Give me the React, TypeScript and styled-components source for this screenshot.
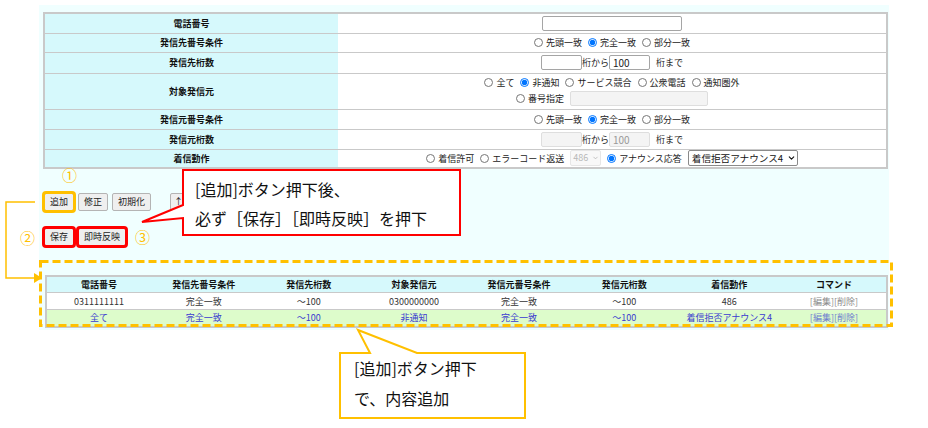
import React from "react";
import styled, { createGlobalStyle } from "styled-components";
import { ChevronDown } from "lucide-react";

const GlobalStyle = createGlobalStyle`
  html, body { margin: 0; padding: 0; background: #ffffff; }
  body { font-family: "Noto Sans CJK JP", "Noto Sans", sans-serif; }
`;

const ORANGE = "#ffc000";
const RED = "#ff0000";
const LABEL_BG = "#d6f9fc";
const LINE = "#c9c9c9";

const Page = styled.div`
  position: relative;
  width: 928px;
  height: 428px;
  overflow: hidden;
  box-sizing: border-box;
  padding: 5px 0 0 39px;
  font-family: "Noto Sans CJK JP", "Noto Sans", sans-serif;
  color: #222;
`;

const Panel = styled.div`
  width: 850px;
  box-sizing: border-box;
  background: #f0ffff;
  padding: 7px 1px 2px 4px;
`;

const FormTable = styled.table`
  width: 845px;
  border-collapse: collapse;
  border: 2px solid ${LINE};
  font-size: 9px;
  line-height: 13px;
`;

const FormRow = styled.tr<{ $h: number }>`
  height: ${(p) => p.$h}px;
`;

const LabelCell = styled.th`
  width: 293px;
  background: ${LABEL_BG};
  font-weight: bold;
  color: #111;
  text-align: center;
  padding: 0;
  border-bottom: 1px solid ${LINE};
`;

const ValueCell = styled.td`
  background: #ffffff;
  text-align: center;
  padding: 0;
  border-bottom: 1px solid ${LINE};
`;

const Line = styled.div`
  display: flex;
  justify-content: center;
  align-items: center;
  gap: 6px;
  white-space: nowrap;
  & + & {
    margin-top: 2px;
  }
`;

const Choice = styled.label`
  display: inline-flex;
  align-items: center;
  gap: 3px;
  color: #222;
`;

const Radio = styled.input.attrs({ type: "radio", readOnly: true })`
  width: 9px;
  height: 9px;
  margin: 0;
`;

const TextBox = styled.input<{ $w: number; $off?: boolean }>`
  box-sizing: border-box;
  width: ${(p) => p.$w}px;
  height: 15px;
  margin: 0;
  padding: 0 3px;
  border: 1px solid ${(p) => (p.$off ? "#dedede" : "#a5a5a5")};
  border-radius: 2px;
  background: ${(p) => (p.$off ? "#f4f4f4" : "#ffffff")};
  color: ${(p) => (p.$off ? "#999" : "#222")};
  font-family: inherit;
  font-size: 10px;
  line-height: 13px;
  text-align: left;
`;

const Joined = styled.span`
  display: inline-flex;
  align-items: center;
`;

const SelectWrap = styled.span<{ $off?: boolean }>`
  position: relative;
  display: inline-flex;
  align-items: center;
  color: ${(p) => (p.$off ? "#a0a0a0" : "#111")};
  & > svg {
    position: absolute;
    right: 2px;
    top: 50%;
    transform: translateY(-50%);
    pointer-events: none;
  }
`;

const Select = styled.select<{ $w: number; $off?: boolean }>`
  appearance: none;
  -webkit-appearance: none;
  box-sizing: border-box;
  width: ${(p) => p.$w}px;
  height: 16px;
  margin: 0;
  padding: 0 ${(p) => (p.$off ? 9 : 12)}px 0 ${(p) => (p.$off ? 2 : 3)}px;
  border: 1px solid ${(p) => (p.$off ? "#dcdcdc" : "#8a8a8a")};
  border-radius: 2px;
  background: ${(p) => (p.$off ? "#f6f6f6" : "#ffffff")};
  color: ${(p) => (p.$off ? "#9a9a9a" : "#111")};
  font-family: inherit;
  font-size: ${(p) => (p.$off ? 9 : 9.6)}px;
  line-height: 14px;
  text-overflow: clip;
`;

const Controls = styled.div`
  display: flex;
  flex-direction: column;
  gap: 17px;
  margin-top: 24px;
  padding-left: 1px;
`;

const ButtonRow = styled.div`
  display: flex;
  gap: 4px;
  height: 18px;
`;

const Btn = styled.button<{ $mark?: "orange" | "red"; $sep?: boolean; $narrow?: boolean }>`
  box-sizing: border-box;
  height: 18px;
  margin: 0 0 0 ${(p) => (p.$sep ? 15 : 0)}px;
  padding: 0 ${(p) => (p.$narrow ? 3 : 5)}px;
  border: 1px solid #b4b4b4;
  border-radius: 2px;
  background: #efefef;
  color: #222;
  font-family: inherit;
  font-size: 9px;
  line-height: 16px;
  white-space: nowrap;
  outline: ${(p) =>
    p.$mark === "orange"
      ? `3px solid ${ORANGE}`
      : p.$mark === "red"
      ? `3px solid ${RED}`
      : "none"};
  outline-offset: -1px;
`;

const ResultTable = styled.table`
  width: 843px;
  margin: 29px 0 0 2px;
  border-collapse: collapse;
  border: 2px solid ${LINE};
  font-size: 9px;
  line-height: 13px;
  table-layout: fixed;
`;

const HeadCell = styled.th`
  height: 15px;
  padding: 0;
  background: ${LABEL_BG};
  font-weight: bold;
  color: #111;
  text-align: center;
  border-bottom: 1px solid ${LINE};
`;

const DataRow = styled.tr<{ $alt?: boolean }>`
  height: 17px;
  background: ${(p) => (p.$alt ? "#ddfccb" : "#ffffff")};
  color: ${(p) => (p.$alt ? "#3a3ad0" : "#333")};
`;

const DataCell = styled.td`
  padding: 0;
  text-align: center;
  border-bottom: 1px solid ${LINE};
`;

const Cmd = styled.span<{ $alt?: boolean }>`
  color: ${(p) => (p.$alt ? "#6f7fcf" : "#8c8c8c")};
`;

const Overlay = styled.svg`
  position: absolute;
  left: 0;
  top: 0;
  width: 928px;
  height: 428px;
  pointer-events: none;
`;

const CalloutText = styled.div<{ $x: number; $y: number; $lh: number }>`
  position: absolute;
  left: ${(p) => p.$x}px;
  top: ${(p) => p.$y}px;
  font-family: "Noto Sans CJK JP", sans-serif;
  font-size: 16px;
  line-height: ${(p) => p.$lh}px;
  color: #111;
  white-space: nowrap;
`;

const Step = styled.div<{ $x: number; $y: number }>`
  position: absolute;
  left: ${(p) => p.$x}px;
  top: ${(p) => p.$y}px;
  font-family: "Noto Sans CJK JP", sans-serif;
  font-size: 15px;
  line-height: 18px;
  color: ${ORANGE};
`;

const formRows = [
  "電話番号",
  "発信先番号条件",
  "発信先桁数",
  "対象発信元",
  "発信元番号条件",
  "発信元桁数",
  "着信動作",
];

const MatchChoices = ({ name }: { name: string }) => (
  <Line>
    <Choice>
      <Radio name={name} />
      先頭一致
    </Choice>
    <Choice>
      <Radio name={name} defaultChecked />
      完全一致
    </Choice>
    <Choice>
      <Radio name={name} />
      部分一致
    </Choice>
  </Line>
);

const DigitRange = ({ off }: { off?: boolean }) => (
  <Line>
    <Joined>
      <TextBox $w={41} $off={off} disabled={off} defaultValue="" />
      桁から
      <TextBox $w={41} $off={off} disabled={off} defaultValue="100" />
    </Joined>
    桁まで
  </Line>
);

const headers = [
  "電話番号",
  "発信先番号条件",
  "発信先桁数",
  "対象発信元",
  "発信元番号条件",
  "発信元桁数",
  "着信動作",
  "コマンド",
];

const results = [
  { alt: false, cells: ["0311111111", "完全一致", "～100", "0300000000", "完全一致", "～100", "486"] },
  { alt: true, cells: ["全て", "完全一致", "～100", "非通知", "完全一致", "～100", "着信拒否アナウンス4"] },
];

export default function App() {
  return (
    <Page>
      <GlobalStyle />
      <Panel>
        <FormTable>
          <tbody>
            <FormRow $h={20}>
              <LabelCell>{formRows[0]}</LabelCell>
              <ValueCell>
                <Line>
                  <TextBox $w={140} defaultValue="" />
                </Line>
              </ValueCell>
            </FormRow>
            <FormRow $h={19}>
              <LabelCell>{formRows[1]}</LabelCell>
              <ValueCell>
                <MatchChoices name="dst" />
              </ValueCell>
            </FormRow>
            <FormRow $h={21}>
              <LabelCell>{formRows[2]}</LabelCell>
              <ValueCell>
                <DigitRange />
              </ValueCell>
            </FormRow>
            <FormRow $h={36}>
              <LabelCell>{formRows[3]}</LabelCell>
              <ValueCell>
                <Line>
                  <Choice>
                    <Radio name="src" />
                    全て
                  </Choice>
                  <Choice>
                    <Radio name="src" defaultChecked />
                    非通知
                  </Choice>
                  <Choice>
                    <Radio name="src" />
                    サービス競合
                  </Choice>
                  <Choice>
                    <Radio name="src" />
                    公衆電話
                  </Choice>
                  <Choice>
                    <Radio name="src" />
                    通知圏外
                  </Choice>
                </Line>
                <Line>
                  <Choice>
                    <Radio name="src" />
                    番号指定
                  </Choice>
                  <TextBox $w={138} $off disabled defaultValue="" />
                </Line>
              </ValueCell>
            </FormRow>
            <FormRow $h={20}>
              <LabelCell>{formRows[4]}</LabelCell>
              <ValueCell>
                <MatchChoices name="srcm" />
              </ValueCell>
            </FormRow>
            <FormRow $h={20}>
              <LabelCell>{formRows[5]}</LabelCell>
              <ValueCell>
                <DigitRange off />
              </ValueCell>
            </FormRow>
            <FormRow $h={19}>
              <LabelCell>{formRows[6]}</LabelCell>
              <ValueCell>
                <Line>
                  <Choice>
                    <Radio name="act" />
                    着信許可
                  </Choice>
                  <Choice>
                    <Radio name="act" />
                    エラーコード返送
                  </Choice>
                  <SelectWrap $off>
                    <Select $w={31} $off disabled defaultValue="486">
                      <option value="486">486</option>
                    </Select>
                    <ChevronDown size={7} strokeWidth={2} />
                  </SelectWrap>
                  <Choice>
                    <Radio name="act" defaultChecked />
                    アナウンス応答
                  </Choice>
                  <SelectWrap>
                    <Select $w={110} defaultValue="a4">
                      <option value="a4">着信拒否アナウンス4</option>
                    </Select>
                    <ChevronDown size={9} strokeWidth={3} />
                  </SelectWrap>
                </Line>
              </ValueCell>
            </FormRow>
          </tbody>
        </FormTable>

        <Controls>
          <ButtonRow>
            <Btn $mark="orange">追加</Btn>
            <Btn>修正</Btn>
            <Btn>初期化</Btn>
            <Btn $sep $narrow>↑</Btn>
          </ButtonRow>
          <ButtonRow>
            <Btn $mark="red">保存</Btn>
            <Btn $mark="red">即時反映</Btn>
          </ButtonRow>
        </Controls>

        <ResultTable>
          <thead>
            <tr>
              {headers.map((h) => (
                <HeadCell key={h}>{h}</HeadCell>
              ))}
            </tr>
          </thead>
          <tbody>
            {results.map((r, i) => (
              <DataRow key={i} $alt={r.alt}>
                {r.cells.map((c, j) => (
                  <DataCell key={j}>{c}</DataCell>
                ))}
                <DataCell>
                  <Cmd $alt={r.alt}>[編集][削除]</Cmd>
                </DataCell>
              </DataRow>
            ))}
          </tbody>
        </ResultTable>
      </Panel>

      <Overlay viewBox="0 0 928 428">
        <rect
          x="40.5"
          y="261.5"
          width="851"
          height="64"
          fill="none"
          stroke={ORANGE}
          strokeWidth="3"
          strokeDasharray="8 4"
        />
        <path d="M35 202 H6 V278 H35" fill="none" stroke={ORANGE} strokeWidth="1.5" />
        <polygon points="34,273 42,278 34,283" fill={ORANGE} />
        <path
          d="M183 170 H460 V235 H183 V218 L142 222 L183 205 Z"
          fill="#ffffff"
          stroke={RED}
          strokeWidth="2"
          strokeLinejoin="miter"
        />
        <path
          d="M340 353 H370 L358 330 L417 353 H525 V418 H340 Z"
          fill="#ffffff"
          stroke={ORANGE}
          strokeWidth="2"
        />
      </Overlay>

      <CalloutText $x={195} $y={175} $lh={29}>
        [追加]ボタン押下後、
        <br />
        必ず［保存］［即時反映］を押下
      </CalloutText>
      <CalloutText $x={354} $y={353} $lh={30}>
        [追加]ボタン押下
        <br />
        で、内容追加
      </CalloutText>

      <Step $x={62} $y={166}>①</Step>
      <Step $x={20} $y={229}>②</Step>
      <Step $x={135} $y={228}>③</Step>
    </Page>
  );
}
